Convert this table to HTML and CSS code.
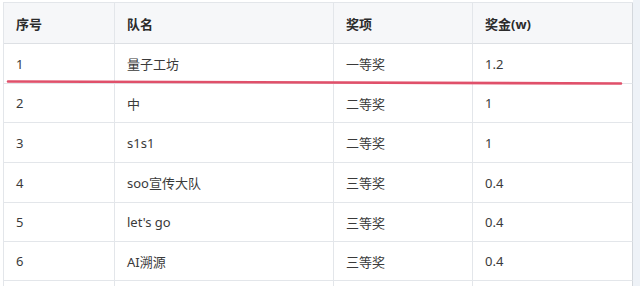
FILE: index.html
```html
<!DOCTYPE html>
<html lang="zh">
<head>
<meta charset="utf-8">
<link rel="stylesheet" href="styles.css">
</head>
<body>
<div class="page">
  <div class="table">
    <div class="row head h41">
      <div class="cell c1">序号</div>
      <div class="cell c2">队名</div>
      <div class="cell c3">奖项</div>
      <div class="cell c4">奖金(w)</div>
    </div>
    <div class="row h40">
      <div class="cell c1">1</div>
      <div class="cell c2">量子工坊</div>
      <div class="cell c3">一等奖</div>
      <div class="cell c4">1.2</div>
    </div>
    <div class="row h39">
      <div class="cell c1">2</div>
      <div class="cell c2">中</div>
      <div class="cell c3">二等奖</div>
      <div class="cell c4">1</div>
    </div>
    <div class="row h40">
      <div class="cell c1">3</div>
      <div class="cell c2">s1s1</div>
      <div class="cell c3">二等奖</div>
      <div class="cell c4">1</div>
    </div>
    <div class="row h40">
      <div class="cell c1">4</div>
      <div class="cell c2">soo宣传大队</div>
      <div class="cell c3">三等奖</div>
      <div class="cell c4">0.4</div>
    </div>
    <div class="row h39">
      <div class="cell c1">5</div>
      <div class="cell c2">let's go</div>
      <div class="cell c3">三等奖</div>
      <div class="cell c4">0.4</div>
    </div>
    <div class="row h39">
      <div class="cell c1">6</div>
      <div class="cell c2">AI溯源</div>
      <div class="cell c3">三等奖</div>
      <div class="cell c4">0.4</div>
    </div>
    <div class="row h39">
      <div class="cell c1"></div>
      <div class="cell c2"></div>
      <div class="cell c3"></div>
      <div class="cell c4"></div>
    </div>
  </div>
  <div class="strip"></div>
  <svg class="underline" width="640" height="90" viewBox="0 0 640 90">
    <line x1="8" y1="81.5" x2="621" y2="83.5" stroke="#e0506a" stroke-width="2.6" stroke-linecap="round"/>
  </svg>
</div>
</body>
</html>
```

FILE: styles.css
```css
html, body {
  margin: 0;
  padding: 0;
  background: #ffffff;
  overflow: hidden;
}

.page {
  position: relative;
  display: flex;
  width: 640px;
  height: 286px;
  overflow: hidden;
  font-family: "Noto Sans", "Noto Sans CJK SC", sans-serif;
  font-size: 13px;
  color: #3a3a3a;
}

.table {
  margin: 2px 0 0 3px;
  border-top: 1px solid #e3e6ea;
  border-left: 1px solid #e3e6ea;
  width: 629px;
  flex: none;
}

.row {
  display: flex;
}

.h41 { height: 41px; }
.h40 { height: 40px; }
.h39 { height: 39px; }

.cell {
  box-sizing: border-box;
  height: 100%;
  display: flex;
  align-items: center;
  padding-left: 12px;
  border-right: 1px solid #e3e6ea;
  border-bottom: 1px solid #e3e6ea;
  white-space: nowrap;
}

.c1 { width: 111px; }
.c2 { width: 219px; }
.c3 { width: 139px; }
.c4 { width: 160px; border-right-color: #d3d7dc; }

.head .cell {
  background: #f6f7f9;
  font-weight: bold;
  color: #2b2b2b;
  border-bottom-color: #dde0e4;
}

.strip {
  flex: 1;
  background: #eef2f7;
}

.underline {
  position: absolute;
  left: 0;
  top: 0;
}
```
